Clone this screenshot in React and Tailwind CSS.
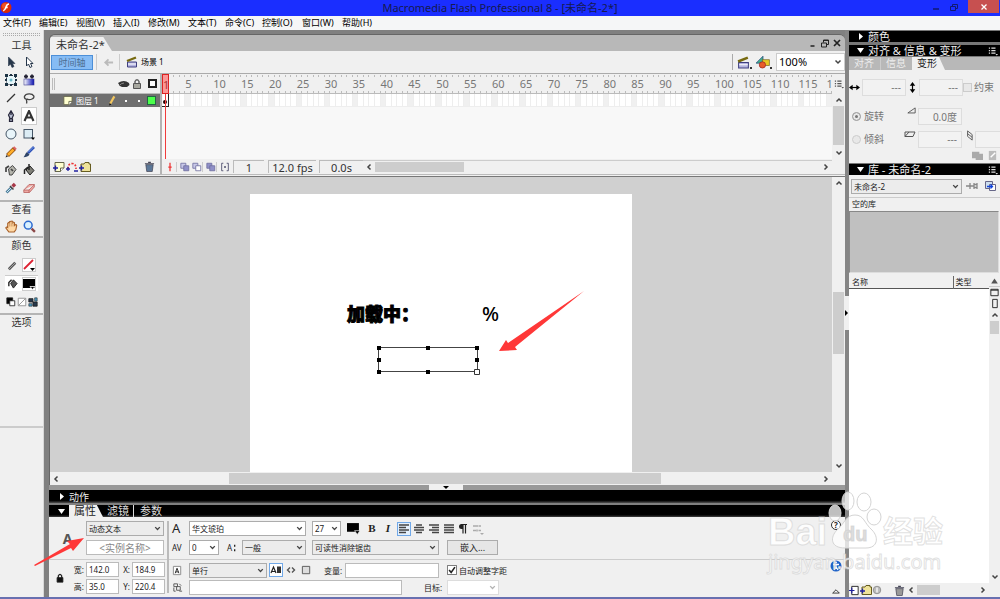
import { useState } from "react"

const MENUS = [
  { label: "文件(F)", width: "w-[36px]" },
  { label: "编辑(E)", width: "w-[37px]" },
  { label: "视图(V)", width: "w-[37px]" },
  { label: "插入(I)", width: "w-[35px]" },
  { label: "修改(M)", width: "w-[40px]" },
  { label: "文本(T)", width: "w-[37px]" },
  { label: "命令(C)", width: "w-[37px]" },
  { label: "控制(O)", width: "w-[40px]" },
  { label: "窗口(W)", width: "w-[40px]" },
  { label: "帮助(H)", width: "w-[36px]" },
]

const FRAME_GROUPS = Array.from({ length: 24 }, (_, i) => (i + 1) * 5)
const FRAMES = Array.from({ length: 120 }, (_, i) => i + 1)

function Glyph({ size = 12, className = "", children }) {
  return (
    <svg
      width={size}
      height={size}
      viewBox="0 0 12 12"
      fill="none"
      stroke="#222"
      strokeWidth="1"
      className={`shrink-0 ${className}`}
      aria-hidden="true"
    >
      {children}
    </svg>
  )
}

const ARROW_PATHS = {
  left: "M7.5 3.5 5 6l2.5 2.5",
  right: "M4.5 3.5 7 6 4.5 8.5",
  up: "M3.5 7.5 6 5l2.5 2.5",
  down: "M3.5 4.5 6 7l2.5-2.5",
}

function Chevron({ dir, size = 12, className = "" }) {
  return (
    <Glyph size={size} className={className}>
      <path d={ARROW_PATHS[dir]} stroke="#444" strokeWidth="1.5" />
    </Glyph>
  )
}

function Scrollbar({ vertical, start, size, className = "" }) {
  const thumb = vertical
    ? { top: `${start}%`, height: `${size}%` }
    : { left: `${start}%`, width: `${size}%` }
  return (
    <div className={`flex items-center bg-[#f0f0f0] ${vertical ? "flex-col" : ""} ${className}`}>
      <button type="button" aria-label="向前滚动">
        <Chevron dir={vertical ? "up" : "left"} />
      </button>
      <div className="relative flex-1 self-stretch">
        <div
          className={`absolute bg-[#cdcdcd] ${vertical ? "inset-x-px" : "inset-y-px"}`}
          style={thumb}
        />
      </div>
      <button type="button" aria-label="向后滚动">
        <Chevron dir={vertical ? "down" : "right"} />
      </button>
    </div>
  )
}

function Select({ label, options, disabled, className = "" }) {
  return (
    <label
      className={`relative flex h-[15px] items-center border border-[#acacac] bg-[#ececec] ${className}`}
    >
      <select
        aria-label={label}
        disabled={disabled}
        className="h-full w-full appearance-none bg-transparent pl-0.5 text-[8px] leading-[13px] outline-none"
      >
        {options.map((o) => (
          <option key={o}>{o}</option>
        ))}
      </select>
      <Chevron
        dir="down"
        size={11}
        className={`pointer-events-none absolute right-0 ${disabled ? "opacity-40" : ""}`}
      />
    </label>
  )
}

function TextBox({ label, value, placeholder, className = "" }) {
  return (
    <input
      aria-label={label}
      defaultValue={value}
      placeholder={placeholder}
      className={`h-[15px] border border-[#bbb] bg-white px-0.5 text-[8px] leading-[13px] outline-none ${className}`}
    />
  )
}

function PanelMenuIcon({ color = "#ddd" }) {
  return (
    <Glyph size={10}>
      <path d="M1 2.500h1.500M4 2.500h5M1 5.500h1.500M4 5.500h5M1 8.500h1.500M4 8.500h5" stroke={color} strokeWidth="1.300" />
      <path d="M9 9.500h3l-1.500 2z" fill={color} stroke="none" />
    </Glyph>
  )
}

function Triangle({ open, className = "" }) {
  return (
    <svg width="7" height="7" viewBox="0 0 7 7" fill="#fff" className={className} aria-hidden="true">
      {open ? <path d="M0 1h7L3.500 6z" /> : <path d="M2 0v7l4-3.500z" />}
    </svg>
  )
}

function SideHeader({ title, open, menu, className = "" }) {
  return (
    <div
      className={`flex h-[11px] shrink-0 items-center bg-black pl-2 text-[11px] leading-[11px] text-[#eee] ${className}`}
    >
      <button type="button" className="flex items-center gap-1">
        <Triangle open={open} />
        <span>{title}</span>
      </button>
      {menu && (
        <span className="ml-auto pr-0.5">
          <PanelMenuIcon />
        </span>
      )}
    </div>
  )
}

function TitleBar() {
  return (
    <header className="relative flex h-4 shrink-0 items-start justify-center bg-[#1a2eff] text-[11px] leading-4 text-[#151a50]">
      <svg width="13" height="13" viewBox="0 0 13 13" className="absolute top-px left-0" aria-hidden="true">
        <circle cx="6" cy="6.5" r="5.5" fill="#d92a08" />
        <circle cx="5" cy="5" r="3" fill="#ff6a34" opacity=".6" />
        <path d="M9 3C6.5 3 6.500 5 6 6.200S5 9.500 3.200 9.700M5 6.500h2.600" stroke="#fff" strokeWidth="1.500" fill="none" />
      </svg>
      <h1>Macromedia Flash Professional 8 - [未命名-2*]</h1>
      <div className="absolute top-0 right-0 flex h-[13px] items-center gap-1.5 pr-px">
        <button type="button" aria-label="最小化">
          <Glyph>
            <path d="M3 8h6" stroke="#111a70" strokeWidth="1.500" />
          </Glyph>
        </button>
        <button type="button" aria-label="还原">
          <Glyph>
            <path d="M2.500 5.500h5v4h-5zM4.500 5V3.500h5v4H8" stroke="#111a70" />
          </Glyph>
        </button>
        <button type="button" aria-label="关闭" className="ml-0.5 flex h-[13px] w-[31px] items-center justify-center bg-[#c75050]">
          <Glyph size={10}>
            <path d="m3 3 6 6m0-6L3 9" stroke="#fff" strokeWidth="1.500" />
          </Glyph>
        </button>
      </div>
    </header>
  )
}

const TOOLS = [
  { name: "选择", art: <path d="M3.500 1v9l2-2 1.500 3.500 2-1L7.500 7.500H10z" fill="#26364a" stroke="#26364a" strokeWidth=".6" /> },
  { name: "部分选取", art: <path d="M3.500 1v9l2-2 1.500 3.500 2-1L7.500 7.500H10z" fill="#fff" stroke="#26364a" /> },
  {
    name: "任意变形",
    art: (
      <>
        <rect x="1.500" y="1.500" width="9" height="9" stroke="#334" strokeDasharray="1.500 1" fill="#e6f6fa" />
        <path d="M0 0h3v3H0zM9 0h3v3H9zM0 9h3v3H0zM9 9h3v3H9zM5 0h2v2H5zM5 10h2v2H5zM0 5h2v2H0zM10 5h2v2h-2z" fill="#1c3344" stroke="none" />
        <circle cx="6" cy="6" r="1.500" fill="#6ab6c8" stroke="none" />
      </>
    ),
  },
  {
    name: "填充变形",
    art: (
      <>
        <defs>
          <linearGradient id="toolfill">
            <stop stopColor="#fff" />
            <stop offset="1" stopColor="#0a10b0" />
          </linearGradient>
        </defs>
        <rect x="1" y="5" width="10" height="6" fill="url(#toolfill)" stroke="#3c3c90" strokeWidth=".6" />
        <path d="M1 2.500h4M3 .5v4M7 2.500h4M9 .5v4" stroke="#223" strokeWidth="1.800" />
      </>
    ),
  },
  { name: "线条", art: <path d="m2 10 8-8" stroke="#333" strokeWidth="1.300" /> },
  { name: "套索", art: <path d="M3.500 7.500C0 6 1 2 6 1.800s6.500 4 3 5.200C7 8 4.500 7.500 4 7c-1.500 1 .5 2-.5 4.500" stroke="#444" strokeWidth="1.300" /> },
  {
    name: "钢笔",
    art: <path d="M6 .8 3.500 5 5 8.500h2L8.500 5zM6 1v4M4.500 9h3v2.300h-3z" fill="#b7bdd0" stroke="#26263a" strokeWidth="1.200" />,
  },
  { name: "文本", active: true, art: <path d="M1.500 11 6 1l4.500 10M3 7.500h6" stroke="#333" strokeWidth="2.100" /> },
  { name: "椭圆", art: <circle cx="6" cy="6" r="5" fill="#e9f5fa" stroke="#456" /> },
  {
    name: "矩形",
    art: (
      <>
        <rect x="1" y="1.500" width="8.500" height="8.500" fill="#dcecf4" stroke="#456" />
        <path d="M8 9.500h4l-2 2.500z" fill="#000" stroke="none" />
      </>
    ),
  },
  {
    name: "铅笔",
    art: (
      <>
        <path d="m2.500 9.500 7-7" stroke="#8a4a10" strokeWidth="4" />
        <path d="m3 9 5.500-5.500" stroke="#ffae2a" strokeWidth="2.600" />
        <path d="m9 3 1.500-1.500" stroke="#d66" strokeWidth="3.600" />
        <path d="m.5 11.500 2.500-1L1.500 9z" fill="#222" stroke="none" />
      </>
    ),
  },
  {
    name: "刷子",
    art: (
      <>
        <path d="m5 7 6-6" stroke="#2c50b8" strokeWidth="2.600" />
        <path d="m5.500 6 5-5" stroke="#8ab0f0" strokeWidth=".8" />
        <path d="M.5 11.200C2 10 2 7.500 4 6l2.500 2.500c-1 2-3.300 2.700-6 2.700z" fill="#2e4468" stroke="none" />
      </>
    ),
  },
  {
    name: "墨水瓶",
    art: (
      <>
        <path d="m3.500 5 4-3.500 3.500 4-4 5.500H4.500z" fill="#b4b4ac" stroke="#444" />
        <path d="M1 8V4l3-2M6 5l2 2" stroke="#444" strokeWidth="1.700" />
      </>
    ),
  },
  {
    name: "颜料桶",
    art: (
      <>
        <path d="m3 6 4-4 4 4.500-4 4.500z" fill="#808078" stroke="#222" />
        <path d="M1.500 10V6L5 3M6 0v6" stroke="#222" strokeWidth="1.500" />
      </>
    ),
  },
  {
    name: "滴管",
    art: (
      <>
        <path d="M1.500 10.500 6.500 5.500" stroke="#4d7f9c" strokeWidth="2.800" />
        <path d="m2 10 4-4" stroke="#d8f0fa" strokeWidth=".9" />
        <path d="m5 4 3.500 3.500" stroke="#444" strokeWidth="1.500" />
        <path d="M7.500 4.500 10 2" stroke="#a83848" strokeWidth="3.400" />
      </>
    ),
  },
  {
    name: "橡皮擦",
    art: <path d="M.8 8 6 2.500h5.300V5L6.500 10.500H.8zM.8 8H6l5.300-5.500M6 8v2.500" fill="#eea9a4" stroke="#b8605e" strokeWidth=".8" />,
  },
]

function ToolsPanel() {
  return (
    <aside className="flex w-[43px] shrink-0 flex-col bg-[#f0f0f0] text-[10px] leading-[14px] text-[#333]">
      <div className="mx-[3px] mt-[3px] h-[3px] border-y border-dotted border-[#aaa]" />
      <h2 className="mt-0.5 h-[15px] text-center">工具</h2>
      <div className="grid grid-cols-2 px-0.5 pr-[5px]">
        {TOOLS.map((t) => (
          <button
            key={t.name}
            type="button"
            aria-label={t.name}
            className={`mx-px flex h-[18px] items-center justify-center ${
              t.active ? "border border-[#ccc] bg-white" : ""
            }`}
          >
            <Glyph>{t.art}</Glyph>
          </button>
        ))}
      </div>

      <div className="mt-[3px] border-t-2 border-[#b5b5b5]">
        <h2 className="text-center">查看</h2>
        <div className="grid h-5 grid-cols-2 items-center justify-items-center px-0.5 pr-[5px]">
          <button type="button" aria-label="手形工具">
            <Glyph size={13}>
              <path
                d="M3.500 11 .8 7.500Q.5 6 2.500 7V3q1-1.200 1.500 0V1.800q1-1.300 1.500 0V1.500q1-1.300 1.700 0V2.500q1-1 1.600 0V5q1.500-1.500 2 0L10 9 8.500 11z"
                fill="#ffd8a4"
                stroke="#a8622c"
              />
              <path d="M4 3v3M5.700 2v4M7.400 2.500V6" stroke="#b87840" strokeWidth=".6" />
            </Glyph>
          </button>
          <button type="button" aria-label="缩放工具">
            <Glyph size={13}>
              <circle cx="4.800" cy="4.800" r="3.600" fill="#d8f0ff" stroke="#2c6ad0" strokeWidth="1.400" />
              <path d="m8 8 3 3" stroke="#8c4848" strokeWidth="2.200" />
            </Glyph>
          </button>
        </div>
      </div>

      <div className="border-t-2 border-[#b5b5b5]">
        <h2 className="h-[17px] text-center">颜色</h2>
        <div className="mx-[5px] flex h-5 items-center justify-center gap-1">
          <Glyph size={11}>
            <path d="m2 10 7-7" stroke="#555" strokeWidth="3" />
            <path d="m2 10 7-7" stroke="#aaa" />
          </Glyph>
          <button type="button" aria-label="笔触颜色" className="border border-[#ccc] bg-white">
            <Glyph size={12}>
              <path d="m1 10 9-9" stroke="#d23" strokeWidth="1.800" />
              <path d="M7 9h5L9.500 12z" fill="#000" stroke="none" />
            </Glyph>
          </button>
        </div>
        <div className="mx-[5px] flex h-4 items-center justify-center gap-1 border-t border-[#ccc] bg-white">
          <Glyph size={11}>
            <path d="m4 6 3-4 4 4-4 5z" fill="#555" />
            <path d="M2 9V5l3-3" strokeWidth="1.500" />
          </Glyph>
          <button type="button" aria-label="填充颜色" className="border border-[#ccc] bg-white">
            <Glyph size={12}>
              <path d="M0 1h12v9H0z" fill="#000" stroke="none" />
              <path d="M7 8.500h5L9.500 11.500z" fill="#000" stroke="#fff" strokeWidth=".8" />
            </Glyph>
          </button>
        </div>
        <div className="flex h-[22px] items-center justify-center gap-px">
          <button type="button" aria-label="黑白">
            <Glyph size={10}>
              <path d="M1 1h7v7H1z" fill="#000" />
              <path d="M4.500 4.500h6v6h-6z" fill="#fff" />
            </Glyph>
          </button>
          <button type="button" aria-label="没有颜色">
            <Glyph size={10}>
              <path d="M1.500 1.500h9v9h-9zM2 10l8-8" stroke="#888" fill="#fff" />
            </Glyph>
          </button>
          <button type="button" aria-label="交换颜色">
            <Glyph size={10}>
              <path d="M1 2h5v4H1zM6 6h5v5H6z" fill="#26384c" />
              <path d="M8 1h3v4H8zM1 8h4v3H1z" fill="#4b9cc4" stroke="#222" strokeWidth=".7" />
            </Glyph>
          </button>
        </div>
      </div>

      <div className="h-[115px] border-y-2 border-t-[#b5b5b5] border-b-[#ccc]">
        <h2 className="text-center">选项</h2>
      </div>
    </aside>
  )
}

function SceneIcon({ size = 12 }) {
  return (
    <Glyph size={size}>
      <path d="M1.500 6h9v5h-9z" fill="#b4b4e0" stroke="#404080" />
      <path d="M1 5 10 1.500" stroke="#776a10" strokeWidth="2.400" />
      <path d="M2 8h8" stroke="#fff" />
    </Glyph>
  )
}

function DocumentBar() {
  return (
    <>
      <div className="flex h-4 shrink-0 items-end bg-[#b8b8b8]">
        <h2 className="h-3.5 w-[62px] bg-[#f0f0f0] pl-1.5 text-[11px] leading-[15px] text-[#333] [clip-path:polygon(0_0,86%_0,100%_100%,0_100%)]">
          未命名-2*
        </h2>
        <div className="mb-0.5 ml-auto flex pr-0.5">
          <Glyph>
            <path d="M3.500 9h4" strokeWidth="1.600" />
          </Glyph>
          <Glyph>
            <path d="M2.500 6h5v4h-5zM4.500 5.500V3h5v4.500H8M4.500 3.500h5" />
          </Glyph>
          <Glyph>
            <path d="m3 3 6 6m0-6L3 9" strokeWidth="1.700" />
          </Glyph>
        </div>
      </div>

      <div className="flex h-[23px] shrink-0 items-center border-b border-[#aaa] bg-[#f0f0f0] pl-px">
        <button type="button" className="h-[15px] w-[42px] border border-[#4c8fd8] bg-[#86bcf5] text-[9px] leading-[13px] text-[#4c6c90]">
          时间轴
        </button>
        <button type="button" aria-label="返回" className="ml-[3px] flex h-4 w-6 items-center justify-center border-x border-[#ccc]">
          <Glyph size={11}>
            <path d="M2 6h9M6 2.500 2.500 6 6 9.500" stroke="#bbb" strokeWidth="2" />
          </Glyph>
        </button>
        <span className="ml-1.5 flex items-center gap-[3px] text-[8px]">
          <SceneIcon />
          场景 1
        </span>
        <div className="ml-auto flex h-[18px] items-center">
          <span className="mr-1 h-4 border-l border-[#aaa]" />
          <button type="button" aria-label="编辑场景" className="flex items-end">
            <SceneIcon size={13} />
            <span className="mr-1 h-0.5 w-0.5 bg-[#333]" />
          </button>
          <button type="button" aria-label="编辑元件" className="flex items-end">
            <Glyph size={14}>
              <path d="M0 7 6 1v6z" fill="#40b090" stroke="#247" strokeWidth=".6" />
              <path d="M5.500 4h6v5h-6z" fill="#e8c820" stroke="#762" strokeWidth=".6" />
              <circle cx="5.500" cy="8.500" r="2.700" fill="#e85c28" stroke="#922" strokeWidth=".6" />
            </Glyph>
            <span className="mr-1 h-0.5 w-0.5 bg-[#333]" />
          </button>
          <label className="relative flex h-[18px] w-[69px] items-center border border-[#ccc] bg-white">
            <select aria-label="缩放比例" className="h-full w-full appearance-none pl-0.5 text-[11px] leading-4">
              <option>100%</option>
            </select>
            <Chevron dir="down" className="pointer-events-none absolute right-0" />
          </label>
        </div>
      </div>
    </>
  )
}

function PageIcon({ plus, size = 12 }) {
  return (
    <Glyph size={size}>
      <path d="M2 1.500h9V7l-3.500 3.500H2z" fill="#ffffd0" stroke="#66664a" />
      <path d="M7.500 10.500V7H11" fill="#fff" stroke="#66664a" />
      {plus && <path d="M0 7h5M2.500 4.500v5" stroke="#2020a0" strokeWidth="1.300" />}
    </Glyph>
  )
}

function FolderIcon({ size = 12 }) {
  return (
    <Glyph size={size}>
      <path d="M2 3h3l1-1.500h4V3h1.500v7.500H2z" fill="#efe39a" stroke="#665c20" />
      <path d="M0 7h5M2.500 4.500v5" stroke="#2020a0" strokeWidth="1.300" />
    </Glyph>
  )
}

function TrashIcon({ color = "#5c7898" }) {
  return (
    <Glyph size={11}>
      <path d="M2 4h8l-1 7.500H3z" fill={color} stroke="#445" strokeWidth=".8" />
      <path d="M1 3h10M4.500 1.500h3" stroke="#445" strokeWidth="1.300" />
    </Glyph>
  )
}

function LayerColumn() {
  return (
    <div className="flex w-[110px] shrink-0 flex-col">
      <div className="flex h-5 items-center justify-end gap-px border-b border-[#bbb] bg-[#f0f0f0] pr-[3px] pl-0.5">
        <span className="mr-auto h-3 w-[3px] border-x border-[#bbb]" />
        <Glyph>
          <path d="M0 5q6-4 11 0l.5 2L9 9H4L2 8z" fill="#333" stroke="none" />
          <path d="M1 8q2-3 5-3" stroke="#888" />
        </Glyph>
        <Glyph>
          <path d="M4 6V3.500Q6 0 8 3.500V6" stroke="#666" strokeWidth="1.500" />
          <path d="M2.500 5.500h7v5h-7z" fill="#a8a8a0" stroke="#555" />
        </Glyph>
        <span className="ml-1 h-[9px] w-[9px] border-2 border-[#222] bg-white" />
      </div>
      <div className="flex h-[13px] items-center bg-[#707070] pl-3 text-[8px] text-white">
        <PageIcon size={11} />
        <span className="ml-[3px] w-[31px]">图层 1</span>
        <Glyph size={11}>
          <path d="M3.500 9.500 8 1.500" stroke="#f4c860" strokeWidth="2.400" />
          <path d="m2.500 11.500.3-2.500 2 1.200z" fill="#000" stroke="none" />
        </Glyph>
        <span className="ml-[7px] h-0.5 w-0.5 bg-white" />
        <span className="ml-[11px] h-0.5 w-0.5 bg-white" />
        <span className="mr-1 ml-auto h-[9px] w-[9px] border border-[#264] bg-[#4cff4c]" />
      </div>
      <div className="flex-1 bg-[#f8f8f8]" />
      <div className="flex h-[15px] items-center gap-px pl-[3px]">
        <button type="button" aria-label="插入图层">
          <PageIcon plus />
        </button>
        <button type="button" aria-label="添加引导层">
          <Glyph>
            <path d="M2 8Q2 2.500 6 2.500T10 8" stroke="#e33" strokeWidth="1.700" strokeDasharray="2 1.500" />
            <path d="M0 8h4M2 6v4M8 10h4" stroke="#2020a0" strokeWidth="1.300" />
          </Glyph>
        </button>
        <button type="button" aria-label="插入图层文件夹">
          <FolderIcon />
        </button>
        <button type="button" aria-label="删除图层" className="mr-[5px] ml-auto">
          <TrashIcon />
        </button>
      </div>
    </div>
  )
}

function Ticks() {
  return (
    <div className="flex h-0.5">
      {FRAMES.map((f) => (
        <span key={f} className="flex-1 border-r border-[#bbb]" />
      ))}
    </div>
  )
}

function OnionIcon({ front = "#9090c8", back = "#c8c8e8" }) {
  return (
    <Glyph size={10}>
      <path d="M1 1.500h6v6H1z" fill={back} stroke="#7070a0" />
      <path d="M4.500 4.500h6v6h-6z" fill={front} stroke="#7070a0" />
    </Glyph>
  )
}

function Timeline() {
  return (
    <section className="flex h-[101px] shrink-0 border-b border-[#bbb] bg-[#f0f0f0]">
      <LayerColumn />
      <div className="relative flex min-w-0 flex-1 flex-col border-l-2 border-[#b4b4b4]">
        <div className="flex flex-1">
          <div className="relative flex min-w-0 flex-1 flex-col overflow-hidden bg-[#f8f8f8] pl-px">
            <div className="flex h-5 flex-col justify-between border-b border-[#bbb] bg-[#f0f0f0] pt-px">
              <Ticks />
              <div className="grid grid-cols-24 text-[11px] leading-[14px] text-[#777]">
                {FRAME_GROUPS.map((n) => (
                  <div key={n} className="grid min-w-0 grid-cols-5">
                    <span className="col-start-5 min-w-0 whitespace-nowrap">{n}</span>
                  </div>
                ))}
              </div>
              <Ticks />
            </div>
            <div className="flex h-[13px] border-b border-[#eee] bg-white">
              {FRAMES.map((f) => (
                <span
                  key={f}
                  className={`flex-1 border-r border-[#eee] ${f % 5 === 0 ? "bg-[#f0f0f0]" : ""}`}
                />
              ))}
            </div>
            <div className="absolute top-0 bottom-0 left-0 w-[7px]">
              <div className="h-5 w-full border border-[#d22] bg-[#ff7070]/70 text-center text-[11px] leading-5 text-[#a33]">
                1
              </div>
              <div className="flex h-[13px] w-full items-end justify-center border-r border-b border-[#222] pb-0.5">
                <span className="h-1 w-1 rounded-full bg-[#200]" />
              </div>
              <div className="absolute top-5 bottom-0 left-[3px] w-px bg-[#f03c3c]" />
            </div>
          </div>
          <div className="flex w-[13px] flex-col">
            <div className="flex h-5 items-center justify-center">
              <PanelMenuIcon color="#555" />
            </div>
            <Scrollbar vertical start={0} size={96} className="flex-1" />
          </div>
        </div>

        <div className="flex h-[15px] items-center text-[11px] leading-[13px] text-[#333]">
          <button type="button" aria-label="滚动到播放头" className="ml-[3px] border-r border-[#ccc] pr-px">
            <Glyph size={10}>
              <path d="M6 1v10M4 6h4" stroke="#e33" strokeWidth="1.500" />
            </Glyph>
          </button>
          <button type="button" aria-label="绘图纸外观" className="ml-[3px]">
            <OnionIcon />
          </button>
          <button type="button" aria-label="绘图纸外观轮廓" className="ml-0.5 border-r border-[#ccc]">
            <OnionIcon front="#fff" />
          </button>
          <button type="button" aria-label="编辑多个帧" className="ml-[3px] border-r border-[#ccc]">
            <OnionIcon back="#9090c8" />
          </button>
          <button type="button" aria-label="修改绘图纸标记" className="ml-[3px]">
            <Glyph size={10}>
              <path d="M4 1.500H2v9h2M8 1.500h2v9H8" stroke="#446" />
              <path d="M5 5h2v2H5z" fill="#335" stroke="none" />
            </Glyph>
          </button>
          <span className="ml-[3px] h-[13px] w-[31px] border-t border-l border-[#bbb] text-center">1</span>
          <span className="ml-1 h-[13px] w-12 border-t border-l border-[#bbb] text-center">12.0 fps</span>
          <span className="ml-[3px] h-[13px] w-11 border-t border-l border-[#bbb] text-center">0.0s</span>
          <Scrollbar start={0} size={20} className="mr-[13px] h-[13px] flex-1 border-t border-[#ccc]" />
        </div>
      </div>
    </section>
  )
}

function Stage() {
  return (
    <section className="flex min-h-0 flex-1 flex-col border-t border-[#777]">
      <div className="flex min-h-0 flex-1">
        <div className="flex flex-1 justify-center overflow-hidden bg-[#d0d0d0] pt-[17px]">
          <div className="relative w-[382px] bg-white text-black">
            <p className="absolute top-[106px] left-[97px] text-[18px] leading-7 font-black whitespace-nowrap [-webkit-text-stroke:1px_black]">
              加载中：
            </p>
            <p className="absolute top-[106px] left-[232px] text-[20px] leading-7 font-medium">%</p>
            <svg width="104" height="30" viewBox="0 0 104 30" className="absolute top-[151px] left-[126px]" aria-hidden="true">
              <path d="M2.500 2.500h99v24h-99z" fill="none" stroke="#444" />
              <path
                d="M1 1h4v4H1zM50 1h4v4h-4zM99 1h4v4h-4zM1 13h4v4H1zM99 13h4v4h-4zM1 25h4v4H1zM50 25h4v4h-4z"
                fill="#000"
              />
              <path d="M98.500 24.500h5v5h-5z" fill="#fff" stroke="#333" />
            </svg>
            <svg width="86" height="64" viewBox="0 0 86 64" className="absolute top-[96px] left-[249px]" aria-hidden="true">
              <path d="M85 1 16 57l2 3L0 61l7-11 2 3z" fill="#ff3838" />
            </svg>
          </div>
        </div>
        <Scrollbar vertical start={38} size={23} className="w-[13px]" />
      </div>
      <Scrollbar start={22} size={57} className="h-[13px] pr-[13px]" />
    </section>
  )
}

function AlignIcon({ d }) {
  return (
    <Glyph>
      <path d={d} stroke="#444" strokeWidth="1.500" />
    </Glyph>
  )
}

function Properties() {
  const [kerning, setKerning] = useState(true)

  return (
    <section className="relative flex h-20 shrink-0 bg-[#f0f0f0] text-[8px] leading-[13px] text-[#222]">
      <div className="absolute inset-x-0 top-[42px] border-t border-[#ccc]" />

      <div className="relative flex w-[118px] shrink-0 flex-col pr-[3px]">
        <div className="flex h-[42px] items-center">
          <span className="w-[37px] text-center text-[14px] font-bold text-[#555]">A</span>
          <div className="flex flex-1 flex-col gap-1">
            <Select label="文本类型" options={["动态文本", "静态文本", "输入文本"]} />
            <input
              aria-label="实例名称"
              placeholder="<实例名称>"
              className="h-[15px] w-full border border-[#bbb] bg-white text-center text-[10px] leading-[13px] outline-none placeholder:text-[#888]"
            />
          </div>
        </div>
        <div className="flex h-[38px] items-center">
          <Glyph size={10} className="mx-1.5">
            <path d="M4 6V3.500Q6 0 8 3.500V6" strokeWidth="1.500" />
            <path d="M2.500 5.500h7V11h-7z" fill="#111" />
          </Glyph>
          <div className="grid flex-1 grid-cols-[13px_1fr_11px_1fr] items-center gap-y-0.5 text-right">
            <span>宽:</span>
            <TextBox label="宽" value="142.0" className="ml-0.5 w-[33px]" />
            <span>X:</span>
            <TextBox label="X" value="184.9" className="ml-0.5 w-[33px]" />
            <span>高:</span>
            <TextBox label="高" value="35.0" className="ml-0.5 w-[33px]" />
            <span>Y:</span>
            <TextBox label="Y" value="220.4" className="ml-0.5 w-[33px]" />
          </div>
        </div>
      </div>
      <div className="relative my-1 border-l-2 border-[#bbb]" />

      <div className="relative min-w-0 flex-1 pl-[3px]">
        <div className="flex h-[42px] flex-col justify-center gap-1">
          <div className="flex items-center">
            <span className="w-[17px] text-[13px]">A</span>
            <Select label="字体" options={["华文琥珀"]} className="w-[117px] bg-white" />
            <Select label="字号" options={["27"]} className="ml-1.5 w-[29px] bg-white" />
            <button type="button" aria-label="文本颜色" className="ml-1.5">
              <Glyph size={13}>
                <path d="M0 1h11v8H0z" fill="#000" stroke="none" />
                <path d="M7 8h5L9.500 11.500z" fill="#000" stroke="#fff" strokeWidth=".6" />
              </Glyph>
            </button>
            <button type="button" className="ml-1 w-4 text-center font-['Liberation_Serif',serif] text-[11px] font-bold">
              B
            </button>
            <button type="button" className="w-4 text-center font-['Liberation_Serif',serif] text-[11px] font-bold italic">
              I
            </button>
            <button type="button" aria-label="左对齐" className="ml-px border border-[#70a8e8] bg-[#e4f0fc]">
              <AlignIcon d="M1 2h10M1 4.500h7M1 7h10M1 9.500h7" />
            </button>
            <button type="button" aria-label="居中对齐" className="ml-0.5">
              <AlignIcon d="M3 2h6M1 4.500h10M1 7h10M3 9.500h6" />
            </button>
            <button type="button" aria-label="右对齐" className="ml-[3px]">
              <AlignIcon d="M1 2h10M4 4.500h7M1 7h10M4 9.500h7" />
            </button>
            <button type="button" aria-label="两端对齐" className="ml-[3px]">
              <AlignIcon d="M1 2h10M1 4.500h10M1 7h10M1 9.500h10" />
            </button>
            <button type="button" aria-label="编辑格式选项" className="ml-0.5">
              <Glyph>
                <path d="M6 1.500v9M8.500 1.500v9M4.500 1.500H10" strokeWidth="1.200" />
                <path d="M6 1H4.500a2.500 2.500 0 0 0 0 5H6z" fill="#222" stroke="none" />
              </Glyph>
            </button>
            <button type="button" disabled aria-label="改变文本方向" className="ml-[3px]">
              <Glyph>
                <path d="M1 3h3M5 2v2M6.500 3H9M1 7.500h3M5 6.500v2M6.500 7.500H9" stroke="#aaa" strokeWidth="1.500" />
                <path d="M8 10h4l-2 2z" fill="#aaa" stroke="none" />
              </Glyph>
            </button>
          </div>
          <div className="flex items-center">
            <span className="w-[17px]">AV</span>
            <Select label="字符间距" options={["0"]} className="w-[30px] bg-white" />
            <span className="ml-2 flex w-[15px] items-center">
              A
              <Glyph size={8}>
                <path d="M4 1v3M4 8v3" strokeWidth="2" />
              </Glyph>
            </span>
            <Select label="字符位置" options={["一般"]} className="w-16" />
            <Select label="字体呈现方法" options={["可读性消除锯齿"]} className="ml-1.5 w-[127px]" />
            <button type="button" className="ml-2 h-[15px] w-[51px] border border-[#acacac] bg-[#e6e6e6] text-[9px] leading-[13px]">
              嵌入...
            </button>
          </div>
        </div>

        <div className="flex h-[38px] flex-col justify-center gap-0.5 pt-px">
          <div className="flex items-center">
            <Glyph size={11} className="mr-1.5">
              <path d="M1.500 1.500h8v9h-8z" fill="#fff" stroke="#888" />
              <path d="m3.500 9 2-5.500 2 5.500M4 7.500h3" />
            </Glyph>
            <Select label="线条类型" options={["单行", "多行"]} className="w-[78px]" />
            <button type="button" aria-label="可选" className="ml-0.5 border border-[#70a8e8] bg-white">
              <Glyph>
                <path d="m1 9 2.500-6L6 9M2 7.500h3" strokeWidth="1.200" />
                <path d="M7 2.500h4V9H7z" fill="#333" stroke="none" />
              </Glyph>
            </button>
            <button type="button" aria-label="将文本呈现为 HTML" className="ml-0.5">
              <Glyph>
                <path d="M5 3.500 2.500 6 5 8.500M7 3.500 9.500 6 7 8.500" stroke="#555" strokeWidth="1.400" />
              </Glyph>
            </button>
            <button type="button" aria-label="在文本周围显示边框" className="ml-1">
              <Glyph size={11}>
                <path d="M1.500 1.500h8v8h-8z" fill="#ddd" stroke="#555" />
              </Glyph>
            </button>
            <label className="ml-3 flex items-center">
              <span className="w-[21px]">变量:</span>
              <TextBox label="变量" className="w-[94px]" />
            </label>
            <label className="ml-2 flex items-center gap-0.5">
              <input
                type="checkbox"
                checked={kerning}
                onChange={(e) => setKerning(e.target.checked)}
                className="absolute opacity-0"
              />
              <Glyph size={10}>
                <path d="M.5.5h11v11H.5z" fill="#fff" stroke="#555" />
                {kerning && <path d="m2.500 6 2.500 3 4.500-6.500" strokeWidth="1.900" />}
              </Glyph>
              自动调整字距
            </label>
          </div>
          <div className="flex items-center">
            <Glyph size={11} className="mr-1.5">
              <path d="M2 2h4v3H2zM5 5h4v4H5zM2 6v4h2M8 2l2 2M8 10h3" stroke="#555" />
            </Glyph>
            <TextBox label="URL 链接" className="w-[213px]" />
            <span className="ml-[22px] w-[22px]">目标:</span>
            <Select label="目标" options={[""]} disabled className="ml-px w-[52px] border-[#ddd] bg-white" />
          </div>
        </div>

        <div className="absolute top-0 right-px bottom-0 flex w-4 flex-col items-center pt-[3px] pb-px">
          <button type="button" aria-label="帮助" className="h-2.5 w-2.5 rounded-full border border-[#333] bg-white text-center text-[8px] leading-2 font-bold">
            ?
          </button>
          <button type="button" aria-label="辅助功能" className="mt-[30px]">
            <Glyph>
              <circle cx="6" cy="6" r="5.500" fill="#1e62c8" stroke="none" />
              <path d="M3 4.500h6M6 4.500V7M4 10l2-3 2 3" stroke="#fff" strokeWidth="1.300" />
              <circle cx="6" cy="2.500" r="1" fill="#fff" stroke="none" />
            </Glyph>
          </button>
          <Glyph size={10} className="mt-auto">
            <path d="M2 8.500h8L6 4.500z" />
          </Glyph>
        </div>
      </div>
    </section>
  )
}

function BottomPanels() {
  return (
    <>
      <div className="relative h-[5px] shrink-0 bg-[#999]">
        <button
          type="button"
          aria-label="折叠面板"
          className="absolute top-0 left-[380px] flex h-[5px] w-[34px] items-center justify-center bg-[#f0f0f0]"
        >
          <svg width="6" height="3" viewBox="0 0 6 3" aria-hidden="true">
            <path d="M0 0h6L3 3z" />
          </svg>
        </button>
      </div>
      <div className="flex h-[13px] shrink-0 items-center gap-1 bg-linear-to-b from-black from-75% to-[#555] pl-[9px] text-[10px] leading-3 text-[#eee]">
        <Triangle />
        动作
      </div>
      <div className="mt-0.5 flex h-3 shrink-0 items-center bg-linear-to-b from-black from-75% to-[#444] pl-[9px] text-[10px] leading-3 text-[#ddd]">
        <Triangle open />
        <div role="tablist" className="ml-1 flex h-full items-center">
          <button
            type="button"
            role="tab"
            aria-selected="true"
            className="h-full w-[34px] bg-[#f0f0f0] pl-[5px] text-left text-[11px] text-[#222] [clip-path:polygon(0_0,82%_0,100%_100%,0_100%)]"
          >
            属性
          </button>
          <button type="button" role="tab" className="ml-1 border-r border-[#ddd] pr-1 text-[11px]">
            滤镜
          </button>
          <button type="button" role="tab" className="ml-1.5 text-[11px]">
            参数
          </button>
        </div>
      </div>
      <Properties />
    </>
  )
}

function NumberField({ label, value }) {
  return (
    <input
      aria-label={label}
      defaultValue={value}
      disabled
      className="h-[17px] w-11 shrink-0 border border-[#ddd] bg-[#f2f2f2] pr-1 text-right text-[10px] text-[#777]"
    />
  )
}

function TransformPanel() {
  return (
    <section className="h-[93px] shrink-0 overflow-hidden bg-[#f0f0f0] pt-2 text-[10px] whitespace-nowrap text-[#777]">
      <div className="flex h-[18px] items-center">
        <Glyph size={11} className="mr-0.5">
          <path d="M3 6h6" stroke="#000" strokeWidth="1.300" />
          <path d="M0 6l4-3v6zM12 6 8 3v6z" fill="#000" stroke="none" />
        </Glyph>
        <NumberField label="宽度" value="---" />
        <Glyph size={11} className="mx-px">
          <path d="M6 3v6" stroke="#000" strokeWidth="1.300" />
          <path d="M6 0 3 4h6zM6 12 3 8h6z" fill="#000" stroke="none" />
        </Glyph>
        <NumberField label="高度" value="---" />
        <label className="flex items-center gap-0.5">
          <input type="checkbox" disabled className="h-[9px] w-[9px] appearance-none border border-[#ccc] bg-[#e8e8e8]" />
          约束
        </label>
      </div>
      <div className="mt-[11px] flex h-[18px] items-center">
        <label className="flex w-[57px] shrink-0 items-center gap-[3px] pl-[3px]">
          <input
            type="radio"
            name="transform"
            disabled
            defaultChecked
            className="h-[9px] w-[9px] appearance-none rounded-full border border-[#aaa] bg-[#777] shadow-[inset_0_0_0_2px_#e8e8e8]"
          />
          旋转
        </label>
        <Glyph size={11} className="mr-px self-start">
          <path d="M2 6.500h8V1z" stroke="#555" />
        </Glyph>
        <NumberField label="旋转角度" value="0.0度" />
      </div>
      <div className="mt-[5px] flex h-[18px] items-center">
        <label className="flex w-[55px] shrink-0 items-center gap-[3px] pl-[3px]">
          <input
            type="radio"
            name="transform"
            disabled
            className="h-[9px] w-[9px] appearance-none rounded-full border border-[#ccc] bg-[#e8e8e8]"
          />
          倾斜
        </label>
        <Glyph size={12} className="mr-0.5 self-start">
          <path d="M1 2h10L9 6.500H1zM1 6.500 5 2" stroke="#555" />
        </Glyph>
        <NumberField label="水平倾斜" value="---" />
        <Glyph size={11} className="mx-px mb-2">
          <path d="m5 1 5 4v6L5 7zM5 4l5 4" stroke="#555" />
        </Glyph>
        <NumberField label="垂直倾斜" value="" />
      </div>
      <div className="mt-px flex h-3 items-center justify-end gap-1 pr-0.5">
        <Glyph size={11}>
          <path d="M0 2h8v7H0zM4 4h8v7H4z" fill="#aaa" stroke="none" />
        </Glyph>
        <Glyph size={11}>
          <path d="M2 1h8v10H2z" fill="#bbb" stroke="none" />
          <path d="m4 8 5-5" stroke="#fff" strokeWidth="1.500" />
        </Glyph>
      </div>
    </section>
  )
}

function LibraryPanel() {
  return (
    <section className="flex min-h-0 flex-1 flex-col bg-[#f0f0f0] text-[8px] leading-3 text-[#222]">
      <div className="flex h-[23px] shrink-0 items-center border-b border-[#ccc] pl-0.5">
        <Select label="库文档" options={["未命名-2"]} className="w-[111px]" />
        <button type="button" aria-label="固定当前库" className="ml-1">
          <Glyph>
            <path d="M0 6h4M4 3v6M4 6h4M8 3v6M11 3v6M8 4.500h3M8 7.500h3" stroke="#888" strokeWidth="1.300" />
          </Glyph>
        </button>
        <button type="button" aria-label="新建库面板" className="ml-1.5">
          <Glyph>
            <path d="M1.500 1.500h7v7h-7z" fill="#cde" stroke="#668" />
            <path d="M5.500 4.500h6v6h-6z" fill="#fff" stroke="#668" />
            <path d="M3 6.500h5M6.500 4.500l2 2-2 2" stroke="#1144dd" strokeWidth="1.300" />
          </Glyph>
        </button>
      </div>
      <p className="h-[13px] shrink-0 pl-[3px]">空的库</p>
      <div className="mr-px h-[62px] shrink-0 border border-[#888] border-r-[#ddd] border-b-[#ddd] bg-[#c0c0c0]" />
      <div className="mt-[3px] flex min-h-0 flex-1">
        <div className="flex-1 bg-white">
          <table className="w-full table-fixed border-collapse text-left">
            <thead>
              <tr className="h-3 border-b border-[#555] bg-[#f0f0f0]">
                <th className="w-[104px] border-r border-[#666] p-0 pl-[3px] font-normal">名称</th>
                <th className="p-0 pl-0.5 font-normal">类型</th>
              </tr>
            </thead>
            <tbody />
          </table>
        </div>
        <div className="flex w-[11px] flex-col items-center">
          <Glyph size={11} className="border-b border-[#ccc]">
            <path d="M2 9h8L6 3z" fill="#555" stroke="none" />
          </Glyph>
          <Glyph size={11}>
            <path d="M2 2.500h8v7H2zM2 3.500h8" />
          </Glyph>
          <Glyph size={11}>
            <path d="M4 1.500h5v9H4z" />
          </Glyph>
          <Scrollbar vertical start={0} size={5} className="w-[11px] flex-1" />
        </div>
      </div>
      <div className="flex h-[14px] shrink-0 items-center">
        <button type="button" aria-label="新建元件">
          <Glyph size={11}>
            <path d="M3 1.500h7v9H3z" fill="#fff" />
            <path d="M0 6h6M3 3v6" stroke="#2020a0" strokeWidth="1.300" />
          </Glyph>
        </button>
        <button type="button" aria-label="新建文件夹">
          <FolderIcon />
        </button>
        <button type="button" disabled aria-label="属性">
          <Glyph size={10}>
            <circle cx="6" cy="6" r="4.500" fill="#bbb" stroke="#888" />
            <path d="M6 3v6" stroke="#fff" strokeWidth="1.500" />
          </Glyph>
        </button>
        <button type="button" aria-label="删除" className="ml-3">
          <TrashIcon color="#999" />
        </button>
        <Scrollbar start={0} size={38} className="mr-[11px] h-3 flex-1" />
      </div>
    </section>
  )
}

function RightPanels() {
  return (
    <aside className="flex w-[151px] shrink-0 flex-col bg-[#777]">
      <SideHeader title="颜色" className="mt-px" />
      <SideHeader title="对齐 & 信息 & 变形" open menu className="mt-[3px]" />
      <div role="tablist" className="mt-px flex h-[13px] shrink-0 items-center bg-[#b8b8b8] pl-[5px] text-[10px] leading-[13px] text-[#eee]">
        <button type="button" role="tab" className="w-[27px] border-r border-[#ccc] text-left">
          对齐
        </button>
        <button type="button" role="tab" className="w-[31px] pl-[5px] text-left">
          信息
        </button>
        <button
          type="button"
          role="tab"
          aria-selected="true"
          className="h-full w-[33px] bg-[#f0f0f0] pl-[5px] text-left text-[#222] [clip-path:polygon(0_0,82%_0,100%_100%,0_100%)]"
        >
          变形
        </button>
      </div>
      <TransformPanel />
      <SideHeader title="库 - 未命名-2" open menu className="mt-px" />
      <LibraryPanel />
    </aside>
  )
}

function Watermark() {
  return (
    <div
      className="pointer-events-none absolute right-[54px] bottom-5 h-[88px] w-[178px] text-white/85 [-webkit-text-stroke:1px_rgba(205,205,205,0.6)]"
      aria-hidden="true"
    >
      <svg width="178" height="88" viewBox="0 0 178 88" className="absolute inset-0" fill="#fff" fillOpacity=".75" stroke="#d4d4d4">
        <ellipse cx="80" cy="12" rx="6" ry="9" />
        <ellipse cx="96" cy="13" rx="7" ry="9" />
        <ellipse cx="67" cy="24" rx="6" ry="8" />
        <ellipse cx="106" cy="28" rx="7" ry="8" />
        <path d="M87 26c9 0 9 8 17 15 7 7 6 18-6 18H77c-15 0-15-11-8-18 8-7 9-15 18-15z" />
      </svg>
      <div className="absolute top-[23px] left-0 flex items-center font-['Liberation_Sans','Noto_Sans_CJK_SC',sans-serif] font-bold whitespace-nowrap">
        <span className="w-[75px] text-[38px] leading-10">Bai</span>
        <span className="w-[40px] pt-1 text-[20px] leading-8 text-[#ddd]">du</span>
        <span className="text-[30px] leading-10">经验</span>
      </div>
      <span className="absolute top-[59px] left-0 text-[20px] leading-7 whitespace-nowrap">jingyan.baidu.com</span>
    </div>
  )
}

export default function App() {
  return (
    <div className="relative flex h-screen flex-col overflow-hidden border-b-2 border-[#6870b0] bg-[#8c8c8c] font-['Noto_Sans','Noto_Sans_CJK_SC',sans-serif] text-black">
      <TitleBar />
      <nav className="flex h-[14px] shrink-0 items-center bg-[#f5f6f7] pl-[3px] text-[9px] leading-[14px]">
        {MENUS.map((m) => (
          <button key={m.label} type="button" className={`text-left whitespace-nowrap ${m.width}`}>
            {m.label}
          </button>
        ))}
      </nav>

      <div className="flex min-h-0 flex-1">
        <ToolsPanel />
        <div className="flex min-w-0 flex-1 flex-col border-l border-[#d8d8d8] bg-[#808080] pt-1 pl-[5px]">
          <div className="flex min-h-0 flex-1 flex-col overflow-hidden rounded-t-md border-t border-l border-[#666]">
            <DocumentBar />
            <Timeline />
            <div className="h-px shrink-0 bg-[#f0f0f0]" />
            <Stage />
          </div>
          <BottomPanels />
        </div>
        <div className="flex w-1 shrink-0 flex-col justify-center bg-[#858585]">
          <button type="button" aria-label="折叠右侧面板" className="mb-0.5 flex h-[34px] items-center bg-[#f0f0f0]">
            <svg width="3" height="6" viewBox="0 0 3 6" aria-hidden="true">
              <path d="M0 0v6l3-3z" />
            </svg>
          </button>
        </div>
        <RightPanels />
      </div>

      <svg width="52" height="30" viewBox="0 0 52 30" className="pointer-events-none absolute bottom-[30px] left-[34px]" aria-hidden="true">
        <path d="m0 28 36-21-3-3 17-3-11 13-2-3L1 29z" fill="#ff3838" />
      </svg>
      <Watermark />
    </div>
  )
}
